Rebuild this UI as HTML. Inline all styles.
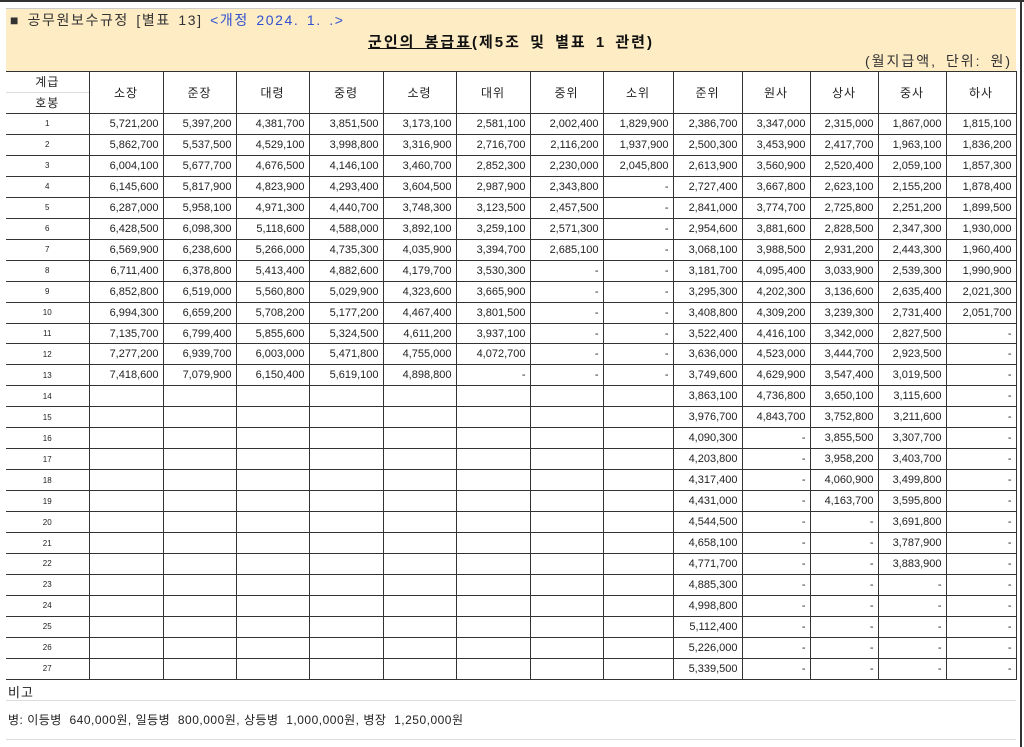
<!DOCTYPE html>
<html><head><meta charset="utf-8"><style>
*{margin:0;padding:0;box-sizing:border-box}
body{width:1024px;height:747px;background:#fff;position:relative;overflow:hidden;font-family:"Liberation Sans","Noto Sans CJK KR",sans-serif;color:#222}
.topline{position:absolute;left:0;top:0;width:1024px;height:2px;background:#333}
.rline{position:absolute;left:1020px;top:0;width:2px;height:747px;background:#333}
.hdr{position:absolute;left:6px;top:8px;width:1010px;height:63px;background:#fdecc4;border-top:1px solid #ccc}
.h1{position:absolute;left:4px;top:1px;font-size:14px;color:#333;letter-spacing:1.6px;word-spacing:2px}
.h1 span{color:#3050d0}
.h2{position:absolute;left:0;width:1010px;top:22px;text-align:center;font-size:15px;font-weight:bold;color:#111;letter-spacing:2px;word-spacing:3px}
.h2 u{text-decoration:underline}
.h3{position:absolute;right:4px;top:42px;font-size:14px;color:#333;letter-spacing:2px;word-spacing:3px}
table{position:absolute;left:6px;top:71px;border-collapse:collapse;table-layout:fixed;width:1010px}
td{border:1px solid #333;height:20.96px;font-size:11px;text-align:right;padding-right:4px;white-space:nowrap}
td:first-child{border-left:none;text-align:center;font-size:8px;padding:0}
th{border:1px solid #333;font-weight:normal;font-size:12px;height:42px;letter-spacing:1px}
.note1{position:absolute;left:8px;top:682px;font-size:13px;letter-spacing:1px}
.note2{position:absolute;left:8px;top:711px;font-size:12px;letter-spacing:0.5px}
.sep{position:absolute;left:6px;width:1010px;height:1px;background:#ddd}
</style></head><body>
<div class="topline"></div><div class="rline"></div>
<div class="hdr">
<div class="h1">■ 공무원보수규정 [별표 13] <span>&lt;개정 2024. 1. .&gt;</span></div>
<div class="h2"><u>군인의 봉급표</u>(제5조 및 별표 1 관련)</div>
<div class="h3">(월지급액, 단위: 원)</div>
</div>
<table>
<colgroup><col style="width:83px"><col style="width:74px"><col style="width:73px"><col style="width:73px"><col style="width:74px"><col style="width:73px"><col style="width:74px"><col style="width:73px"><col style="width:70px"><col style="width:69px"><col style="width:68px"><col style="width:68px"><col style="width:68px"><col style="width:70px"></colgroup>
<tr><th style="border-left:none;padding:0"><div style="height:21px;line-height:21px;border-bottom:1px solid #ddd">계급</div><div style="height:20px;line-height:20px">호봉</div></th><th>소장</th><th>준장</th><th>대령</th><th>중령</th><th>소령</th><th>대위</th><th>중위</th><th>소위</th><th>준위</th><th>원사</th><th>상사</th><th>중사</th><th>하사</th></tr>
<tr><td>1</td><td>5,721,200</td><td>5,397,200</td><td>4,381,700</td><td>3,851,500</td><td>3,173,100</td><td>2,581,100</td><td>2,002,400</td><td>1,829,900</td><td>2,386,700</td><td>3,347,000</td><td>2,315,000</td><td>1,867,000</td><td>1,815,100</td></tr>
<tr><td>2</td><td>5,862,700</td><td>5,537,500</td><td>4,529,100</td><td>3,998,800</td><td>3,316,900</td><td>2,716,700</td><td>2,116,200</td><td>1,937,900</td><td>2,500,300</td><td>3,453,900</td><td>2,417,700</td><td>1,963,100</td><td>1,836,200</td></tr>
<tr><td>3</td><td>6,004,100</td><td>5,677,700</td><td>4,676,500</td><td>4,146,100</td><td>3,460,700</td><td>2,852,300</td><td>2,230,000</td><td>2,045,800</td><td>2,613,900</td><td>3,560,900</td><td>2,520,400</td><td>2,059,100</td><td>1,857,300</td></tr>
<tr><td>4</td><td>6,145,600</td><td>5,817,900</td><td>4,823,900</td><td>4,293,400</td><td>3,604,500</td><td>2,987,900</td><td>2,343,800</td><td>-</td><td>2,727,400</td><td>3,667,800</td><td>2,623,100</td><td>2,155,200</td><td>1,878,400</td></tr>
<tr><td>5</td><td>6,287,000</td><td>5,958,100</td><td>4,971,300</td><td>4,440,700</td><td>3,748,300</td><td>3,123,500</td><td>2,457,500</td><td>-</td><td>2,841,000</td><td>3,774,700</td><td>2,725,800</td><td>2,251,200</td><td>1,899,500</td></tr>
<tr><td>6</td><td>6,428,500</td><td>6,098,300</td><td>5,118,600</td><td>4,588,000</td><td>3,892,100</td><td>3,259,100</td><td>2,571,300</td><td>-</td><td>2,954,600</td><td>3,881,600</td><td>2,828,500</td><td>2,347,300</td><td>1,930,000</td></tr>
<tr><td>7</td><td>6,569,900</td><td>6,238,600</td><td>5,266,000</td><td>4,735,300</td><td>4,035,900</td><td>3,394,700</td><td>2,685,100</td><td>-</td><td>3,068,100</td><td>3,988,500</td><td>2,931,200</td><td>2,443,300</td><td>1,960,400</td></tr>
<tr><td>8</td><td>6,711,400</td><td>6,378,800</td><td>5,413,400</td><td>4,882,600</td><td>4,179,700</td><td>3,530,300</td><td>-</td><td>-</td><td>3,181,700</td><td>4,095,400</td><td>3,033,900</td><td>2,539,300</td><td>1,990,900</td></tr>
<tr><td>9</td><td>6,852,800</td><td>6,519,000</td><td>5,560,800</td><td>5,029,900</td><td>4,323,600</td><td>3,665,900</td><td>-</td><td>-</td><td>3,295,300</td><td>4,202,300</td><td>3,136,600</td><td>2,635,400</td><td>2,021,300</td></tr>
<tr><td>10</td><td>6,994,300</td><td>6,659,200</td><td>5,708,200</td><td>5,177,200</td><td>4,467,400</td><td>3,801,500</td><td>-</td><td>-</td><td>3,408,800</td><td>4,309,200</td><td>3,239,300</td><td>2,731,400</td><td>2,051,700</td></tr>
<tr><td>11</td><td>7,135,700</td><td>6,799,400</td><td>5,855,600</td><td>5,324,500</td><td>4,611,200</td><td>3,937,100</td><td>-</td><td>-</td><td>3,522,400</td><td>4,416,100</td><td>3,342,000</td><td>2,827,500</td><td>-</td></tr>
<tr><td>12</td><td>7,277,200</td><td>6,939,700</td><td>6,003,000</td><td>5,471,800</td><td>4,755,000</td><td>4,072,700</td><td>-</td><td>-</td><td>3,636,000</td><td>4,523,000</td><td>3,444,700</td><td>2,923,500</td><td>-</td></tr>
<tr><td>13</td><td>7,418,600</td><td>7,079,900</td><td>6,150,400</td><td>5,619,100</td><td>4,898,800</td><td>-</td><td>-</td><td>-</td><td>3,749,600</td><td>4,629,900</td><td>3,547,400</td><td>3,019,500</td><td>-</td></tr>
<tr><td>14</td><td></td><td></td><td></td><td></td><td></td><td></td><td></td><td></td><td>3,863,100</td><td>4,736,800</td><td>3,650,100</td><td>3,115,600</td><td>-</td></tr>
<tr><td>15</td><td></td><td></td><td></td><td></td><td></td><td></td><td></td><td></td><td>3,976,700</td><td>4,843,700</td><td>3,752,800</td><td>3,211,600</td><td>-</td></tr>
<tr><td>16</td><td></td><td></td><td></td><td></td><td></td><td></td><td></td><td></td><td>4,090,300</td><td>-</td><td>3,855,500</td><td>3,307,700</td><td>-</td></tr>
<tr><td>17</td><td></td><td></td><td></td><td></td><td></td><td></td><td></td><td></td><td>4,203,800</td><td>-</td><td>3,958,200</td><td>3,403,700</td><td>-</td></tr>
<tr><td>18</td><td></td><td></td><td></td><td></td><td></td><td></td><td></td><td></td><td>4,317,400</td><td>-</td><td>4,060,900</td><td>3,499,800</td><td>-</td></tr>
<tr><td>19</td><td></td><td></td><td></td><td></td><td></td><td></td><td></td><td></td><td>4,431,000</td><td>-</td><td>4,163,700</td><td>3,595,800</td><td>-</td></tr>
<tr><td>20</td><td></td><td></td><td></td><td></td><td></td><td></td><td></td><td></td><td>4,544,500</td><td>-</td><td>-</td><td>3,691,800</td><td>-</td></tr>
<tr><td>21</td><td></td><td></td><td></td><td></td><td></td><td></td><td></td><td></td><td>4,658,100</td><td>-</td><td>-</td><td>3,787,900</td><td>-</td></tr>
<tr><td>22</td><td></td><td></td><td></td><td></td><td></td><td></td><td></td><td></td><td>4,771,700</td><td>-</td><td>-</td><td>3,883,900</td><td>-</td></tr>
<tr><td>23</td><td></td><td></td><td></td><td></td><td></td><td></td><td></td><td></td><td>4,885,300</td><td>-</td><td>-</td><td>-</td><td>-</td></tr>
<tr><td>24</td><td></td><td></td><td></td><td></td><td></td><td></td><td></td><td></td><td>4,998,800</td><td>-</td><td>-</td><td>-</td><td>-</td></tr>
<tr><td>25</td><td></td><td></td><td></td><td></td><td></td><td></td><td></td><td></td><td>5,112,400</td><td>-</td><td>-</td><td>-</td><td>-</td></tr>
<tr><td>26</td><td></td><td></td><td></td><td></td><td></td><td></td><td></td><td></td><td>5,226,000</td><td>-</td><td>-</td><td>-</td><td>-</td></tr>
<tr><td>27</td><td></td><td></td><td></td><td></td><td></td><td></td><td></td><td></td><td>5,339,500</td><td>-</td><td>-</td><td>-</td><td>-</td></tr>
</table>
<div class="note1">비고</div>
<div class="sep" style="top:700px"></div>
<div class="note2">병: 이등병&nbsp; 640,000원, 일등병&nbsp; 800,000원, 상등병&nbsp; 1,000,000원, 병장&nbsp; 1,250,000원</div>
<div class="sep" style="top:739px"></div>
</body></html>
